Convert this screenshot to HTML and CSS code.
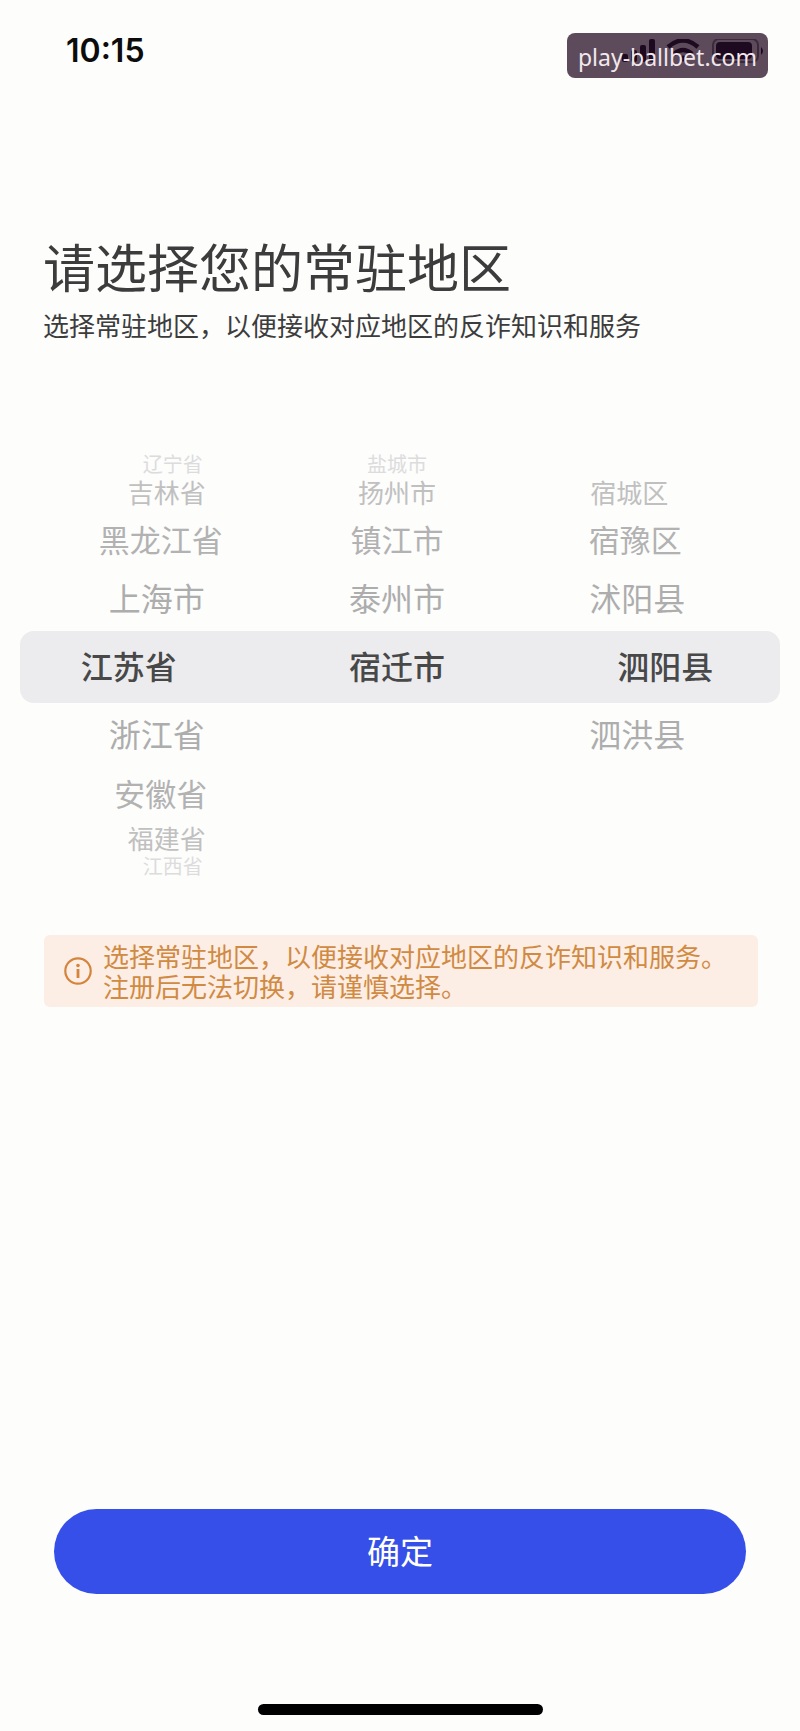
FILE: index.html
```html
<!DOCTYPE html>
<html lang="zh-CN">
<head>
<meta charset="utf-8">
<meta name="viewport" content="width=device-width, initial-scale=1">
<title>请选择您的常驻地区</title>
<link rel="stylesheet" href="styles.css">
</head>
<body>
<header class="status">
  <time class="clock">10:15</time>
  <div class="tag">
    <svg class="signals" viewBox="0 0 146 26" aria-hidden="true">
      <g fill="#1d0a20">
        <rect x="0" y="15" width="6" height="8" rx="2"/>
        <rect x="9" y="11" width="6" height="12" rx="2"/>
        <rect x="18" y="6" width="6" height="17" rx="2"/>
        <rect x="27" y="0" width="6" height="23" rx="2"/>
        <rect x="94" y="3" width="36" height="17" rx="4"/>
        <path d="M139 8q4 4 0 8z"/>
        <path d="M57 18q4-3 8 0l-4 5z"/>
      </g>
      <g fill="none" stroke="#1d0a20" stroke-width="4.500">
        <path d="M46 8q15-13 30 0M52 15q9-8 18 0"/>
      </g>
      <rect x="91" y="0" width="45" height="23" rx="6" fill="none" stroke="#3b293c" stroke-width="2"/>
    </svg>
    <span class="tag-text">play-ballbet.com</span>
  </div>
</header>

<main class="page">
  <h1 class="title">请选择您的常驻地区</h1>
  <p class="subtitle">选择常驻地区，以便接收对应地区的反诈知识和服务</p>

  <form class="form" id="region">
    <div class="picker">
      <div class="column province" role="radiogroup" aria-label="省份">
        <label class="item far up"><input type="radio" name="province">辽宁省</label>
        <label class="item third up"><input type="radio" name="province">吉林省</label>
        <label class="item second up"><input type="radio" name="province">黑龙江省</label>
        <label class="item first up"><input type="radio" name="province">上海市</label>
        <label class="item selected"><input type="radio" name="province" checked>江苏省</label>
        <label class="item first down"><input type="radio" name="province">浙江省</label>
        <label class="item second down"><input type="radio" name="province">安徽省</label>
        <label class="item third down"><input type="radio" name="province">福建省</label>
        <label class="item far down"><input type="radio" name="province">江西省</label>
      </div>
      <div class="column city" role="radiogroup" aria-label="城市">
        <label class="item far up"><input type="radio" name="city">盐城市</label>
        <label class="item third up"><input type="radio" name="city">扬州市</label>
        <label class="item second up"><input type="radio" name="city">镇江市</label>
        <label class="item first up"><input type="radio" name="city">泰州市</label>
        <label class="item selected"><input type="radio" name="city" checked>宿迁市</label>
      </div>
      <div class="column county" role="radiogroup" aria-label="区县">
        <label class="item third up"><input type="radio" name="county">宿城区</label>
        <label class="item second up"><input type="radio" name="county">宿豫区</label>
        <label class="item first up"><input type="radio" name="county">沭阳县</label>
        <label class="item selected"><input type="radio" name="county" checked>泗阳县</label>
        <label class="item first down"><input type="radio" name="county">泗洪县</label>
      </div>
    </div>
  </form>

  <div class="notice">
    <svg class="info" viewBox="0 0 28 28" aria-hidden="true">
      <circle cx="14" cy="14" r="12.700" fill="none" stroke="#d4843c" stroke-width="2.200"/>
      <circle cx="14" cy="8.500" r="1.800" fill="#d4843c"/>
      <path d="M14 12v9" fill="none" stroke="#d4843c" stroke-width="2.800"/>
    </svg>
    <p class="notice-text">选择常驻地区，以便接收对应地区的反诈知识和服务。<br>注册后无法切换，请谨慎选择。</p>
  </div>
</main>

<footer class="footer">
  <button class="confirm" type="submit" form="region">确定</button>
  <div class="home-bar"></div>
</footer>
</body>
</html>
```
FILE: styles.css
```css
* {
  box-sizing: border-box;
}

body {
  margin: 0;
  min-height: 100vh;
  display: flex;
  flex-direction: column;
  background: #fdfdfc;
  color: #3c3c3c;
  font-family: "Noto Sans CJK SC", sans-serif;
}

.status {
  display: flex;
  justify-content: space-between;
  align-items: flex-start;
  padding: 33px 32px 0 66px;
}

.clock {
  color: #0c0c0c;
  font: 600 32px/36px Inter, sans-serif;
}

.tag {
  display: grid;
  align-items: center;
  height: 45px;
  padding: 0 11px;
  border-radius: 8px;
  background: #5d4b5c;
}

.signals,
.tag-text {
  grid-area: 1 / 1;
}

.signals {
  width: 146px;
  height: 26px;
  justify-self: end;
  align-self: start;
  margin: 6px -11px 0 0;
}

.tag-text {
  z-index: 1;
  padding-top: 2px;
  color: #f2e8ec;
  font: 23px/32px "Noto Sans", sans-serif;
}

.page {
  padding: 0 20px;
}

.title {
  margin: 150px 23px 0;
  font-size: 52px;
  line-height: 76px;
  font-weight: 400;
}

.subtitle {
  margin: 0 23px;
  padding-top: 5px;
  font-size: 26px;
  line-height: 32px;
}

.form {
  margin-top: 116px;
}

.picker {
  display: grid;
  grid-template-columns: repeat(3, 1fr);
}

.column {
  display: grid;
  grid-template-rows: 18px 38px 54px 64px 72px 64px 54px 38px 18px;
}

.item {
  display: flex;
  align-items: center;
  justify-content: center;
  padding-bottom: 4px;
  color: #adadad;
  white-space: nowrap;
}

.item input {
  appearance: none;
  width: 0;
  height: 0;
  margin: 0;
}

.far {
  color: #dcdcdc;
  font-size: 20px;
  line-height: 18px;
}

.third {
  color: #c0c0c0;
  font-size: 26px;
  line-height: 34px;
}

.second {
  color: #b2b2b2;
  font-size: 31px;
}

.first {
  font-size: 32px;
}

.selected {
  grid-row: 5;
  background: #ececef;
  color: #484848;
  font-size: 32px;
  font-weight: 500;
}

.far.up { grid-row: 1; }
.third.up { grid-row: 2; }
.second.up { grid-row: 3; }
.first.up { grid-row: 4; }
.first.down { grid-row: 6; }
.second.down { grid-row: 7; }
.third.down { grid-row: 8; }
.far.down { grid-row: 9; }

/* The outer wheels lean toward the centre as they turn away. */
.province .first { padding-left: 20px; }
.province .second { padding-left: 28px; }
.province .third { padding-left: 40px; }
.province .far { padding-left: 52px; }
.province .selected {
  padding-right: 36px;
  border-radius: 14px 0 0 14px;
}

.city .item { padding-right: 6px; }

.county .first { padding-right: 32px; }
.county .second { padding-right: 36px; }
.county .third { padding-right: 48px; }
.county .selected {
  padding-left: 24px;
  border-radius: 0 14px 14px 0;
}

.notice {
  display: flex;
  align-items: center;
  gap: 11px;
  margin: 58px 22px 0 24px;
  padding: 6px 20px;
  border-radius: 6px;
  background: #fcede5;
  color: #d08a42;
}

.info {
  flex: none;
  width: 28px;
  height: 28px;
}

.notice-text {
  margin: 0;
  font-size: 26px;
  line-height: 30px;
}

.footer {
  display: flex;
  flex-direction: column;
  align-items: center;
  margin-top: auto;
  padding: 0 54px 16px;
}

.confirm {
  width: 100%;
  height: 85px;
  padding: 0 0 4px;
  border: 0;
  border-radius: 43px;
  background: #364fe8;
  color: #fff;
  font: 33px/48px "Noto Sans CJK SC", sans-serif;
}

.home-bar {
  width: 36%;
  min-width: 285px;
  height: 11px;
  margin-top: 110px;
  border-radius: 6px;
  background: #000;
}
```
